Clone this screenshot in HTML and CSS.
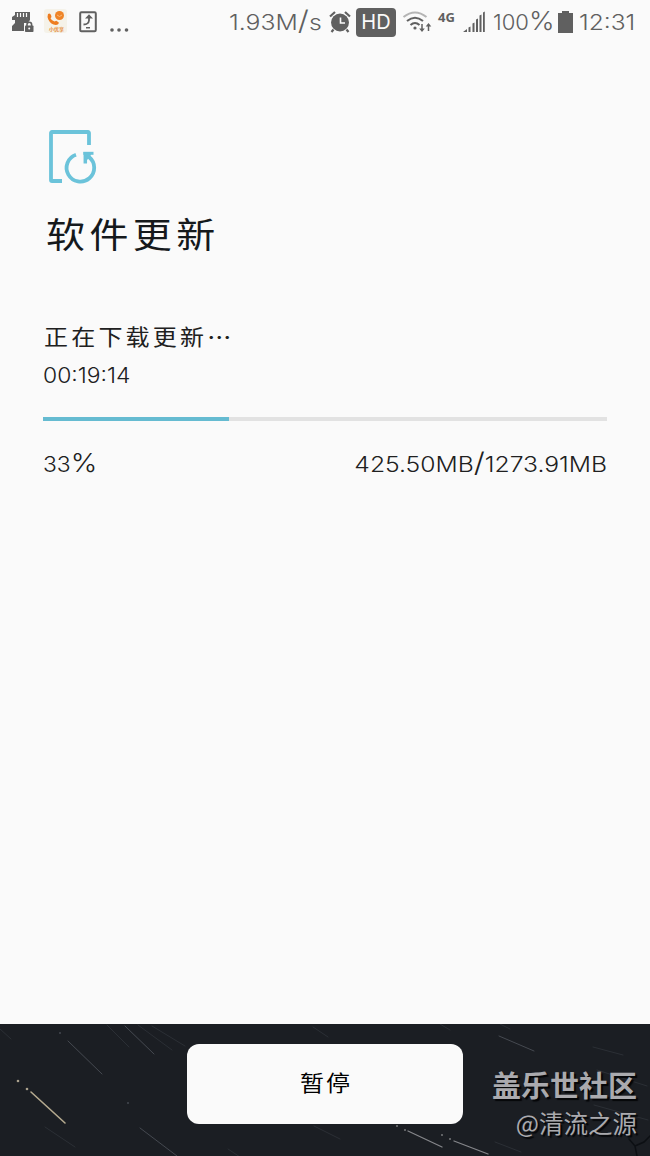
FILE: index.html
```html
<!DOCTYPE html>
<html lang="zh-CN">
<head>
<meta charset="utf-8">
<title>软件更新</title>
<link rel="stylesheet" href="styles.css">
</head>
<body>
<div class="screen">
  <header class="status">
    <svg class="status-left" width="140" height="44" viewBox="0 0 140 44" fill="#606060">
      <path d="M15 12H30V20L27 24V31H12V26L15 23V20H12V17L15 15Z"/>
      <path d="M17.500 13v4M20.500 13v4M23.500 13v4M26.500 13v4" stroke="#fafafa" stroke-width="1.200"/>
      <rect x="24" y="23" width="11" height="10" fill="#fafafa"/>
      <path d="M27 26v-1.500a2.300 2.300 0 0 1 4.600 0V26" fill="none" stroke="#606060" stroke-width="1.600"/>
      <rect x="25" y="25.500" width="8.500" height="6.500" rx=".8"/><circle cx="29.200" cy="28.500" r="1" fill="#fafafa"/>
      <rect x="44" y="9" width="23" height="24" rx="3" fill="#f5f2e9"/>
      <circle cx="59.500" cy="15.500" r="4.500" fill="#ef8427"/>
      <path d="M57 15q2.500 3 5 0" fill="none" stroke="#f8c183" stroke-width=".9"/>
      <path d="M48 14q2-1.500 3 1l.5 2-1 1.300q1 2.500 4 3.200l1.800-.8 2.500 1.800q0 2-3 2.500-5-.5-7.500-5.500-1.300-3-.3-5.500Z" fill="#ee7c20"/>
      <text x="49" y="30.500" class="tiny">小优享</text>
      <rect x="80.200" y="12.200" width="15.600" height="19" rx="1.200" fill="none" stroke="#606060" stroke-width="2"/>
      <path d="M83.500 24.500q5 0 5.500-4V17" fill="none" stroke="#606060" stroke-width="1.800"/><path d="M85 18.500l4-4.200 4 4.200ZM86 27h4v1.500h-4z"/>
      <circle cx="112" cy="30" r="1.800"/><circle cx="119" cy="30" r="1.800"/><circle cx="126.500" cy="30" r="1.800"/>
    </svg>
    <span class="speed"><span class="fit speed-text">1.93M<span class="slash">/</span>s</span></span>
    <svg class="alarm" width="22" height="24" viewBox="0 0 22 24" fill="#606060">
      <circle cx="11" cy="12.500" r="9"/><path d="M1 6.500 6 2M21 6.500 16 2M4.500 19.500 2.500 22M17.500 19.500l2 2.500" stroke="#606060" stroke-width="2.200"/>
      <path d="M11.500 7.500v5.500H16" fill="none" stroke="#fafafa" stroke-width="1.600"/>
    </svg>
    <span class="hd">HD</span>
    <svg class="wifi" width="30" height="26" viewBox="0 0 30 26" fill="none" stroke="#606060" stroke-width="2.100">
      <path d="M1.500 8Q13-1 24.500 8" stroke="#b5b5b5"/><path d="M5 12Q13 5.500 21 12M8.500 16Q13 12 17.500 16"/>
      <circle cx="13" cy="19" r="1.600" fill="#606060" stroke="none"/>
      <path d="M20 15v6M26.500 22v-6" stroke-width="1.500"/><path d="M17.200 19.500h5.600L20 23ZM23.700 17.500h5.600L26.500 14Z" fill="#606060" stroke="none"/>
    </svg>
    <span class="net">4G</span>
    <svg class="signal" width="23" height="22" viewBox="0 0 23 22" fill="#606060"><path d="M0 21 4 18v3ZM5.500 16.500l2-1V21h-2ZM9.500 12.500l2-1V21h-2ZM13 8.500l2-1V21h-2ZM16.500 4.500l2-1V21h-2ZM20 1.500l1.800-1V21H20Z"/></svg>
    <span class="charge"><span class="fit charge-text">100<span class="pct">%</span></span></span>
    <svg class="battery" width="15" height="22" viewBox="0 0 15 22"><path d="M4 0h7v2h4v20H0V2h4Z" fill="#606060"/></svg>
    <span class="clock"><span class="fit clock-text">12:31</span></span>
  </header>
  <main class="content">
    <svg class="update-icon" width="50" height="56" viewBox="0 0 50 56" fill="none" stroke="#6bc3da" stroke-width="3.800">
      <path d="M42 16V4Q42 3 41 3H5Q4 3 4 4V51Q4 52 5 52H15"/><path d="M29 25.700A13.800 13.800 0 1 0 42 28"/>
      <path d="M36.300 24.300H46.500" stroke-width="3"/><path d="M38.300 23v11.500" stroke-width="3.500"/><path d="M37 23h8L43 28 38 33Z" fill="#6bc3da" stroke="none"/>
    </svg>
    <h1 class="title">软件更新</h1>
    <p class="message">正在下载更新<span class="dots">⋯</span></p>
    <p class="remaining"><span class="fit remaining-text">00:19:14</span></p>
    <div class="track"><div class="bar" style="width:33%"></div></div>
    <div class="figures"><span class="fit percent">33<span class="pct">%</span></span><span class="fit size">425.50<span class="unit">MB</span><span class="slash">/</span>1273.91<span class="unit">MB</span></span></div>
  </main>
  <footer class="footer">
    <svg class="stars" width="650" height="132" viewBox="0 0 650 132" fill="none" stroke-linecap="round">
      <g stroke="#2b2f35"><path d="M0 5 11 15M107 1l22 22M138 1l34 25M152 2l33 20M313 3l15 10M440 0l10 6M500 0l10 5M593 23l30 8M597 46l50 16M594 81l54 15M45 103l30 20M314 102l26 13M228 125l15 10M495 118l26 10"/></g>
      <g stroke="#454950"><path d="M125 2l29 28M499 12l35 15M140 104l37 28M68 17l34 33"/></g>
      <path d="M31 68 65 99" stroke="#b5aa8f" stroke-width="1.600"/>
      <g fill="#aaa18d"><circle cx="18" cy="57" r="1.300"/><circle cx="27" cy="65" r="1.300"/></g>
      <path d="M408 107 442 123M454 117l34 13" stroke="#85868a" stroke-width="1.300"/>
      <g fill="#77797b"><circle cx="397" cy="102" r="1"/><circle cx="405" cy="106" r="1"/><circle cx="442" cy="111" r="1"/><circle cx="450" cy="115" r="1"/></g>
      <g fill="#454950"><circle cx="60" cy="9" r="1"/><circle cx="128" cy="79" r="1"/></g>
      <path d="M637 132l-2-10-6-7M635 122l9-4 6-6" stroke="#0c0f13" stroke-width="1.500"/>
    </svg>
    <button class="pause"><span class="pause-text">暂停</span></button>
    <div class="credit"><strong class="community">盖乐世社区</strong><span class="author">@清流之源</span></div>
  </footer>
</div>
</body>
</html>
```
FILE: styles.css
```css
* { box-sizing: border-box; }
body { margin: 0; background: #fafafa; }
.screen { width: 650px; height: 1156px; display: flex; flex-direction: column; background: #fafafa; color: #202020; font-family: Inter, "Noto Sans CJK SC", sans-serif; overflow: hidden; }
.status { height: 44px; display: flex; align-items: center; color: #606060; flex: none; }
.status svg { flex: none; }
.tiny { font: 700 5px "Noto Sans CJK SC", sans-serif; fill: #e59042; }
.fit { display: block; width: max-content; height: 26px; white-space: nowrap; transform-origin: left center; font-weight: 300; font-size: 21px; line-height: 26px; }
.pct { font-size: 26px; font-weight: 300; line-height: 20px; }
.slash { font-size: 27px; font-weight: 300; line-height: 20px; }
.unit { font-weight: 350; }
.speed { width: 95px; margin: 2px 0 0 89px; }
.speed-text { transform: scaleX(1.18); }
.alarm { margin-left: 5px; }
.hd { width: 40px; height: 29px; margin-left: 5px; border-radius: 4px; background: #606060; color: #fafafa; font-size: 20px; line-height: 29px; text-align: center; flex: none; }
.wifi { margin-left: 6px; }
.net { width: 21px; margin: 0 0 11px 6px; font: 700 13px/16px "Open Sans", sans-serif; }
.signal { margin-left: 4px; }
.charge { width: 65px; margin: 2px 0 0 7px; }
.charge-text { transform: scaleX(1.05); }
.clock { margin: 2px 0 0 6px; width: 64px; }
.clock-text { transform: scaleX(1.17); }
.content { flex: 1; padding: 85px 43px 0; }
.update-icon { display: block; margin-left: 4px; }
.title { margin: 18px 0 0 3px; height: 60px; font: 400 39px/60px "Noto Sans CJK SC", sans-serif; letter-spacing: 4.400px; transform: scaleY(.9); color: #15191c; }
.message { margin: 55px 0 0 1px; height: 36px; font: 400 24px/36px "Noto Sans CJK SC", sans-serif; letter-spacing: 3.200px; transform: scaleY(.9); }
.dots { font-weight: 500; }
.remaining { margin: 9px 0 0; height: 26px; }
.remaining-text { transform: scaleX(1.09); }
.track { height: 4px; margin-top: 28px; background: #e2e2e2; }
.bar { height: 4px; background: #65bbd1; }
.figures { display: flex; justify-content: space-between; margin-top: 31px; }
.percent { transform: scaleX(1.09); }
.size { transform-origin: right center; transform: scaleX(1.175); }
.footer { height: 132px; flex: none; position: relative; background: #1b1e23; display: flex; align-items: flex-start; }
.stars { position: absolute; inset: 0; }
.pause { position: relative; margin: 20px 0 0 187px; width: 276px; height: 80px; border: 0; border-radius: 12px; background: #fafafa; color: #000; font: 400 24px/36px "Noto Sans CJK SC", sans-serif; letter-spacing: 2px; padding: 0 0 4px 2px; }
.pause-text { display: block; transform: scaleY(.88); }
.credit { position: relative; width: 174px; padding-top: 40px; text-align: right; font-family: "Noto Sans CJK SC", sans-serif; color: #aaaaae; text-shadow: 2px 2px 1px #050608; }
.community { display: block; font-size: 29px; line-height: 40px; }
.author { display: block; font-size: 24.500px; line-height: 38px; }
```
